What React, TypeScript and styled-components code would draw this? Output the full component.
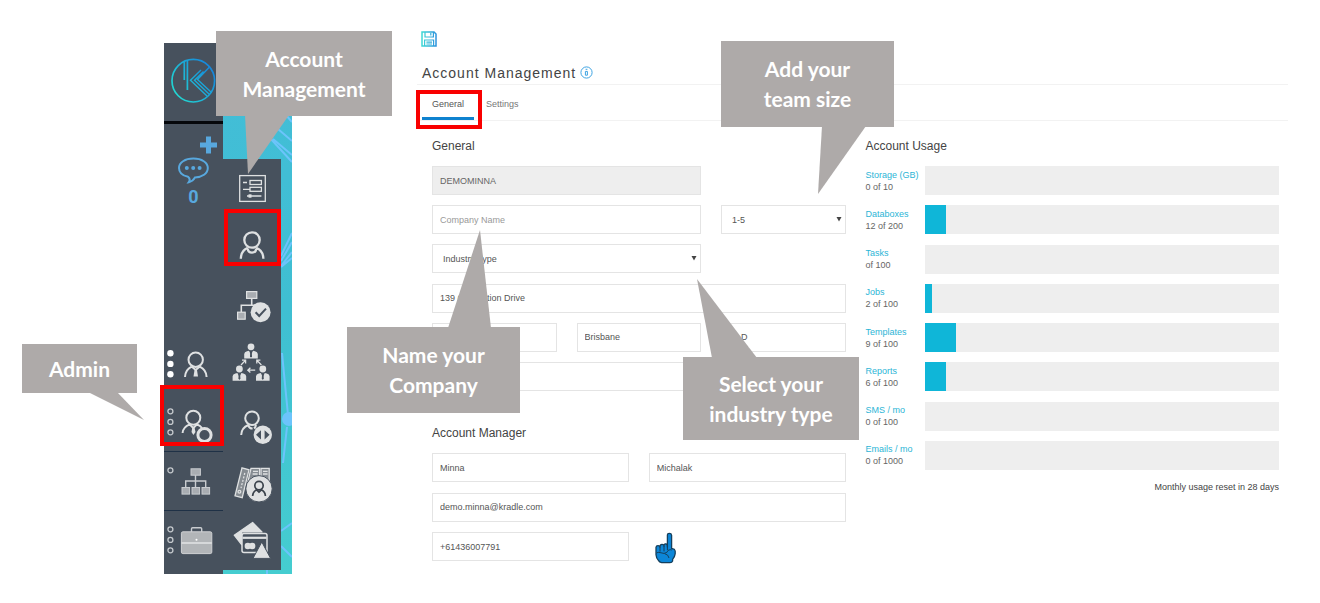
import React from "react";
import styled, { createGlobalStyle } from "styled-components";

const GlobalStyle = createGlobalStyle`
  *, *::before, *::after { box-sizing: border-box; }
  body {
    margin: 0;
    background: #fff;
    color: #555;
    font-family: "Liberation Sans", Arial, sans-serif;
    font-size: 9px;
  }
`;

const Page = styled.div`
  position: relative;
  display: flex;
  align-items: flex-start;
  gap: 125px;
  min-width: 1100px;
  min-height: 100vh;
  padding: 31px 32px 28px 164px;
`;

/* ---------- side navigation ---------- */

const Sidebar = styled.nav`
  position: relative;
  flex: none;
  display: flex;
  width: 128px;
  min-height: 531px;
  margin-top: 12px;
  background: linear-gradient(#43bdd8, #3fbfd2 50%, #45cdd0);
`;

const Network = styled.svg`
  position: absolute;
  inset: 0;
  fill: none;
  stroke: #6cc4fb;
  stroke-width: 2;
`;

const PrimaryNav = styled.div`
  position: relative;
  display: flex;
  flex-direction: column;
  width: 59px;
  background: #47515d;
`;

const SubNav = styled.div`
  position: relative;
  display: grid;
  grid-auto-rows: 1fr;
  width: 58px;
  margin: 116px 0 4px;
  background: #47515d;
`;

const LogoLink = styled.a`
  height: 81px;
  border-bottom: 3px solid #05070b;
`;

const NavButton = styled.button<{ $divided?: boolean; $grow?: boolean }>`
  display: block;
  width: 100%;
  height: ${(p) => (p.$grow ? "63px" : p.$divided ? "59px" : "58px")};
  padding: 0;
  border: 0;
  border-bottom: ${(p) => (p.$divided ? "1px solid #1f3146" : "0")};
  background: none;
  cursor: pointer;
`;

const MessagesButton = styled.button`
  flex: 1;
  display: flex;
  flex-direction: column;
  align-items: center;
  padding: 0;
  border: 0;
  background: none;
  color: #58a8de;
  font: bold 18px/20px Roboto, sans-serif;
  cursor: pointer;
`;

const Glyph = styled.svg`
  display: block;
  fill: none;
  stroke: #dfe1e2;
  stroke-width: 2;
`;

/* ---------- main panel ---------- */

const Main = styled.main`
  flex: 1;
  min-width: 0;
`;

const IconButton = styled.button`
  display: block;
  width: 16px;
  height: 16px;
  margin-left: 4px;
  padding: 0;
  border: 0;
  background: none;
  cursor: pointer;
`;

const TitleRow = styled.header`
  display: flex;
  align-items: center;
  gap: 4px;
  margin-top: 14px;
  padding: 0 5px;
  height: 24px;
  border-bottom: 1px solid #f2f2f2;
`;

const Title = styled.h1`
  margin: 0;
  color: #444;
  font-size: 14px;
  line-height: 20px;
  font-weight: 400;
  letter-spacing: 1px;
`;

const Tabs = styled.div`
  display: flex;
  gap: 2px;
  height: 36px;
  padding: 0 5px;
  border-bottom: 1px solid #f2f2f2;
`;

const Tab = styled.button<{ $active?: boolean }>`
  height: 35px;
  padding: 5px 10px 0;
  border: 0;
  border-bottom: 3px solid ${(p) => (p.$active ? "#0f82cf" : "transparent")};
  background: none;
  color: ${(p) => (p.$active ? "#555" : "#777")};
  font: inherit;
  cursor: pointer;
`;

const Columns = styled.div`
  display: grid;
  grid-template-columns: 1fr 1fr;
  gap: 20px;
  padding: 15px 9px 0 15px;
`;

const Section = styled.section`
  margin-bottom: 32px;
`;

const SectionTitle = styled.h2`
  margin: 0 0 10px;
  color: #444;
  font-size: 12px;
  line-height: 20px;
  font-weight: 400;
`;

const Fields = styled.div<{ $minHeight: number }>`
  display: grid;
  grid-template-columns: repeat(6, 1fr);
  grid-auto-rows: 29px;
  align-content: space-between;
  column-gap: 20px;
  min-height: ${(p) => p.$minHeight}px;
`;

const TextInput = styled.input<{ $span: number; $start?: number }>`
  grid-column: ${(p) => p.$start ?? "auto"} / span ${(p) => p.$span};
  width: 100%;
  height: 29px;
  padding: 0 7px;
  border: 1px solid #e4e4e4;
  border-radius: 0;
  background: #fff;
  color: #555;
  font: inherit;
  &:disabled { background: #eee; color: #666; }
  &::placeholder { color: #999; opacity: 1; }
`;

const SelectBox = styled.div<{ $span: number }>`
  grid-column: span ${(p) => p.$span};
  display: grid;
  align-items: center;
  & > * { grid-area: 1 / 1; }
`;

const Select = styled.select`
  appearance: none;
  width: 100%;
  height: 29px;
  padding: 0 20px 0 10px;
  border: 1px solid #e4e4e4;
  border-radius: 0;
  background: #fff;
  color: #555;
  font: inherit;
`;

const Caret = styled.svg`
  justify-self: end;
  margin-right: 4px;
  fill: #444;
  pointer-events: none;
`;

const Pointer = styled.svg`
  grid-column: span 3;
  margin-left: 6px;
`;

const UsageList = styled.div`
  display: flex;
  flex-direction: column;
  justify-content: space-between;
  min-height: 304px;
`;

const UsageRow = styled.div`
  display: grid;
  grid-template-columns: 59px 1fr;
  align-items: center;
  line-height: 12px;
  white-space: nowrap;
`;

const UsageName = styled.div`
  color: #2cb5d6;
`;

const UsageCount = styled.div`
  color: #666;
`;

const Track = styled.div`
  height: 29px;
  background: #eee;
`;

const Fill = styled.div`
  height: 100%;
  background: #0fb6d8;
`;

const ResetNote = styled.p`
  margin: 11px 0 0;
  color: #444;
  line-height: 12px;
  text-align: right;
`;

/* ---------- annotations ---------- */

interface Box { $x: number; $y: number; $w: number; $h: number }

const Highlight = styled.div<Box>`
  position: absolute;
  left: ${(p) => p.$x}px;
  top: ${(p) => p.$y}px;
  width: ${(p) => p.$w}px;
  height: ${(p) => p.$h}px;
  border: 4px solid #f90000;
  pointer-events: none;
`;

const CalloutBox = styled.div<Box>`
  position: absolute;
  left: ${(p) => p.$x}px;
  top: ${(p) => p.$y}px;
  width: ${(p) => p.$w}px;
  height: ${(p) => p.$h}px;
  display: flex;
  align-items: center;
  justify-content: center;
  background: #aeaaa9;
  color: #fff;
  font: 700 21px/30px Lato, "Open Sans", sans-serif;
  text-align: center;
  white-space: pre-line;
`;

const Tail = styled.svg`
  position: absolute;
  left: 0;
  top: 0;
  overflow: visible;
  fill: #aeaaa9;
`;

function Callout({ x, y, w, h, tail, text }: { x: number; y: number; w: number; h: number; tail: string; text: string }) {
  return (
    <CalloutBox $x={x} $y={y} $w={w} $h={h}>
      <Tail width={w} height={h} aria-hidden="true"><polygon points={tail} /></Tail>
      <span>{text}</span>
    </CalloutBox>
  );
}

/* ---------- icons ---------- */

const light = "#dfe1e2";
const dark = "#47515d";

function Dots({ count, solid }: { count: number; solid?: boolean }) {
  return (
    <g fill={solid ? "#fff" : "none"} stroke={solid ? "none" : "#c5c9cd"} strokeWidth="1.3">
      {[18.3, 28.9, 39.3].slice(0, count).map((cy) => (
        <circle key={cy} cx="6.4" cy={cy} r={solid ? 3.2 : 2.5} />
      ))}
    </g>
  );
}

function TinyPerson({ x, y }: { x: number; y: number }) {
  return (
    <g transform={`translate(${x} ${y})`} stroke="none" fill={light}>
      <circle cx="0" cy="0" r="3.4" />
      <path d="M-6.8 11.8V7.2Q-6.6 4.8-4 4.4L-2 4L0 8L2 4L4 4.4Q6.6 4.8 6.8 7.2V11.8Z" />
      <path d="M-.7 5H.7L1 9.5L0 11L-1 9.5Z" fill={dark} />
    </g>
  );
}

const Logo = () => (
  <Glyph width="59" height="78" role="img" aria-label="Kradle">
    <defs>
      <linearGradient id="brand" gradientUnits="userSpaceOnUse" x1="10" y1="50" x2="50" y2="22">
        <stop offset="0" stopColor="#22d8d2" />
        <stop offset="1" stopColor="#157fdc" />
      </linearGradient>
    </defs>
    <g stroke="url(#brand)" strokeWidth="1.7">
      <circle cx="29.3" cy="37.7" r="21.3" />
      <path d="M20.3 18.5V37M23.4 17V47" />
      <path d="M37 27L26.5 37.2L43 53M39.5 28.5L30.5 37.2L45 51M46 23.5L33.5 36.5L47.5 49.5" strokeWidth="1.4" />
    </g>
  </Glyph>
);

const Chat = () => (
  <Glyph width="59" height="63" aria-hidden="true">
    <g stroke="#58a8de">
      <path d="M44.5 12.5V29.5M36 21H53" strokeWidth="5" />
      <path d="M24 52.8C18 51.5 15 48 15 44C15 38.5 21 34.6 29.4 34.6S43.8 38.5 43.8 44S38 53.4 31 53.4C30 55.4 27.5 57.6 24.8 58.2C26 56.5 26 54.5 24 52.8Z" />
      <circle cx="22.8" cy="44" r="1" />
      <circle cx="29.2" cy="44" r="1" />
      <circle cx="35.6" cy="44" r="1" />
    </g>
  </Glyph>
);

const Staff = () => (
  <Glyph width="59" height="58" aria-hidden="true">
    <Dots count={3} solid />
    <circle cx="31.7" cy="24.7" r="7.2" />
    <path d="M21 42C21.2 36.5 23 33.8 27.6 31.6M42.6 42C42.4 36.5 40.4 33.8 35.8 31.6M27.6 31.6L31.7 35L35.8 31.6" />
    <path d="M30.5 35H33L34 41.5H29.5Z" fill={light} stroke="none" />
  </Glyph>
);

const AdminIcon = () => (
  <Glyph width="59" height="58" aria-hidden="true">
    <Dots count={3} />
    <circle cx="29.3" cy="24.7" r="7" />
    <path d="M18.6 40C18.8 36 20.6 33.6 25.6 31.4M33 31.4Q36.5 33 38 35M25.6 31.4L29.3 35L33 31.4" />
    <path d="M28.2 35H30.6L31.5 39L29.4 42L27.5 39Z" fill={light} stroke="none" />
    <circle cx="40.5" cy="42" r="6.6" strokeWidth="3" fill={dark} />
    <path d="M30 50.2H50" stroke={dark} />
  </Glyph>
);

const OrgChart = () => (
  <Glyph width="59" height="58" aria-hidden="true">
    <Dots count={1} />
    <g fill="#a9adb2" strokeWidth="1" stroke="#c9ccd0">
      <path d="M31.5 23V35M21.7 35V29H41.7V35" fill="none" strokeWidth="1.4" />
      <rect x="27" y="16.8" width="9.4" height="6.4" />
      <rect x="18" y="35.5" width="7.6" height="6.6" />
      <rect x="28" y="35.5" width="7.6" height="6.6" />
      <rect x="38" y="35.5" width="7.6" height="6.6" />
    </g>
  </Glyph>
);

const Briefcase = () => (
  <Glyph width="59" height="63" aria-hidden="true">
    <Dots count={3} />
    <path d="M27.5 21V17.8Q27.5 16.8 28.6 16.8H36.6Q37.7 16.8 37.7 17.8V21" strokeWidth="1.4" stroke="#c9ccd0" />
    <rect x="17.4" y="20.8" width="30.4" height="21.8" rx="1.5" fill="#b2b5b8" stroke="#cfd1d3" strokeWidth="1" />
    <path d="M17.5 32H47.8" stroke="#e6e7e8" strokeWidth="1.4" />
    <circle cx="32.5" cy="28.8" r="1" fill="#fff" stroke="none" />
  </Glyph>
);

const FormIcon = () => (
  <Glyph width="58" height="58" aria-hidden="true">
    <g strokeWidth="1.3">
      <rect x="16.7" y="16.6" width="25.6" height="25.8" />
      <rect x="27" y="21.5" width="11.4" height="4" />
      <rect x="27" y="28.3" width="11.4" height="4" />
      <path d="M20 23.5H24M20 30.3H27M24 37H38.4" />
      <path d="M27 35.3V38.7" strokeWidth="3" />
    </g>
  </Glyph>
);

const Account = () => (
  <Glyph width="58" height="58" aria-hidden="true">
    <circle cx="29" cy="22" r="7.7" strokeWidth="2.3" />
    <path d="M17.8 40.8C18 34.6 20 31.6 24.8 29.8M40.4 40.8C40.2 34.6 38.2 31.6 33.2 29.8M24.8 30.6Q25 34.6 29 34.6Q33 34.6 33.2 30.6" strokeWidth="2.3" />
  </Glyph>
);

const OrgCheck = () => (
  <Glyph width="58" height="58" aria-hidden="true">
    <path d="M28.7 22V29.2M18.3 36V29.2H34" strokeWidth="1.6" />
    <rect x="23.6" y="15.6" width="10.2" height="6.8" fill="#a9adb2" strokeWidth="1.2" />
    <rect x="14.6" y="36.2" width="7.6" height="7" fill="#a9adb2" strokeWidth="1.2" />
    <circle cx="37.6" cy="36.2" r="10" fill={light} stroke="none" />
    <path d="M32.6 36.2L36.2 40L43 32.6" stroke={dark} />
  </Glyph>
);

const Team = () => (
  <Glyph width="58" height="58" aria-hidden="true">
    <TinyPerson x={28} y={11.8} />
    <TinyPerson x={16.4} y={34} />
    <TinyPerson x={39.8} y={34} />
    <g strokeWidth="1.3">
      <path d="M18 30L22.4 25.4M19 25.2H22.6V28.6M38.4 30L34 25.4M37.4 25.2H33.8V28.6M32.2 35.2H24.8M27.4 32.8L24.8 35.2L27.4 37.6" />
    </g>
  </Glyph>
);

const Switcher = () => (
  <Glyph width="58" height="58" aria-hidden="true">
    <circle cx="29" cy="24.2" r="6.8" />
    <path d="M18.2 41C18.4 36 20.4 33 25.4 31M25.4 31Q26 34.6 29.6 34.6M32.8 31Q33 33 31 34.4" />
    <circle cx="39.8" cy="40.8" r="9.2" fill={light} stroke="none" />
    <path d="M38 36.2V45.4L33 40.8ZM41.6 36.2V45.4L46.6 40.8Z" fill={dark} stroke="none" />
  </Glyph>
);

const Records = () => (
  <Glyph width="58" height="58" aria-hidden="true">
    <g strokeWidth="1.3" fill="#868c92">
      <path d="M19 14.8L26 16.8L19.2 44.6L12 42.8Z" />
      <path d="M28 15.4H36.6V30H24.6Z" />
      <path d="M38 15.4H46.2V30H38Z" />
      <path d="M30 18.4H35M29.6 21H34.6M40 18.4H44.6M40 21H44.6" />
      <path d="M21.8 20L18 35" strokeDasharray="2 1.5" />
      <circle cx="16.4" cy="38.8" r="1.4" />
    </g>
    <circle cx="36" cy="35.8" r="13.2" fill={light} stroke={dark} strokeWidth="1" />
    <g stroke="#3b434c" strokeWidth="1.7">
      <circle cx="36" cy="32.6" r="4.2" />
      <path d="M29.6 43C29.8 39.6 31 38 33.6 36.8L36 39L38.4 36.8C41 38 42.2 39.6 42.4 43" />
    </g>
  </Glyph>
);

const Billing = () => (
  <Glyph width="58" height="58" aria-hidden="true">
    <path d="M29.6 11.4L39 21H18.6V33.6L11.2 24.2Z" fill={light} strokeWidth="1.2" strokeLinejoin="round" />
    <rect x="19" y="22.6" width="25" height="18.8" rx="2" fill={dark} strokeWidth="1.5" />
    <path d="M19.5 26.8H43.6" strokeWidth="2.2" />
    <g fill={light} stroke="none">
      <circle cx="24.8" cy="35" r="3.2" />
      <circle cx="29.2" cy="35" r="3.2" />
    </g>
    <path d="M38.8 31L47.6 47.4H30Z" fill={light} stroke={dark} strokeWidth="1" />
  </Glyph>
);

const SaveIcon = () => (
  <svg width="16" height="16" fill="none" stroke="url(#save)" strokeWidth="1.5" aria-hidden="true">
    <defs>
      <linearGradient id="save" gradientUnits="userSpaceOnUse" x1="0" y1="0" x2="16" y2="0">
        <stop offset="0" stopColor="#3fdcd4" />
        <stop offset="1" stopColor="#2b8fdd" />
      </linearGradient>
    </defs>
    <path d="M1 1H13L15 3V15H1Z" />
    <path d="M4 1V6H12.4V1M3.6 15V9H12.6V15M9.8 2V4.6M5.4 11.2H11M5.4 13H11" strokeWidth="1.2" />
  </svg>
);

const InfoIcon = () => (
  <svg width="13" height="13" fill="none" stroke="#3fa4e2" role="img" aria-label="Help">
    <circle cx="6.5" cy="6.5" r="5.6" strokeWidth="1" />
    <path d="M5.4 5.4H7.4V9.2H5.4ZM5.6 3.3H7.4" strokeWidth="1" />
  </svg>
);

const Hand = () => (
  <Pointer width="23" height="32" viewBox="0 0 23 32" fill="#0c86d8" stroke="#153f5c" strokeWidth="1.3" strokeLinejoin="round" aria-hidden="true">
    <path d="M12.4 15V3.2Q12.4 1.4 14.4 1.4T16.6 3.2V16.4L19.4 17.4Q20.6 18.6 20.2 21.6Q19.8 25 17.6 27.4V29Q17 30.6 15 30.6H6.6Q4.4 30.4 3.4 28.4Q1.2 26 1 22.8V15.4Q1.2 13.6 3 13.6T5 15Q5 12.4 7 12.4T9 14Q9 11.6 10.8 11.8T12.4 15Z" />
    <path d="M5 15V19.6M9 14V19.4M12.4 14.6V18M1.6 21Q3 19.8 5 20.6L9 21.4Q12.6 21 13 18.4Q15.4 17.2 16.8 18M9.6 21.6Q13.6 22.6 14 26" fill="none" strokeWidth="1" />
  </Pointer>
);

const CaretIcon = () => (
  <Caret width="6" height="5" aria-hidden="true"><path d="M.5 0H5.5L3 4.5Z" /></Caret>
);

/* ---------- page ---------- */

const usage = [
  { name: "Storage (GB)", count: "0 of 10", percent: 0 },
  { name: "Databoxes", count: "12 of 200", percent: 6 },
  { name: "Tasks", count: "of 100", percent: 0 },
  { name: "Jobs", count: "2 of 100", percent: 2 },
  { name: "Templates", count: "9 of 100", percent: 9 },
  { name: "Reports", count: "6 of 100", percent: 6 },
  { name: "SMS / mo", count: "0 of 100", percent: 0 },
  { name: "Emails / mo", count: "0 of 1000", percent: 0 },
];

const subItems = [
  { label: "Forms", Icon: FormIcon },
  { label: "Account management", Icon: Account },
  { label: "Approvals", Icon: OrgCheck },
  { label: "Teams", Icon: Team },
  { label: "Switch user", Icon: Switcher },
  { label: "Records", Icon: Records },
  { label: "Billing", Icon: Billing },
];

export default function App() {
  return (
    <Page>
      <GlobalStyle />

      <Sidebar aria-label="Main">
        <Network width="128" height="531" aria-hidden="true">
          <path d="M122 72L128 79M114 86L128 98M106 95L128 119M109 96L128 112M117 213L128 190M117 218L128 199M117 223L128 209M117 224L128 215M118 310L124 372M119 420L123 384M117 488L128 480M117 503L128 514M103 525V531" />
          <circle cx="125" cy="376" r="7" fill="#6cc4fb" stroke="none" />
        </Network>
        <PrimaryNav>
          <LogoLink href="#home"><Logo /></LogoLink>
          <MessagesButton aria-label="Messages">
            <Chat />
            <span>0</span>
          </MessagesButton>
          <NavButton aria-label="Staff"><Staff /></NavButton>
          <NavButton aria-label="Admin" $divided><AdminIcon /></NavButton>
          <NavButton aria-label="Organisation" $divided><OrgChart /></NavButton>
          <NavButton aria-label="Jobs" $grow><Briefcase /></NavButton>
        </PrimaryNav>
        <SubNav>
          {subItems.map(({ label, Icon }) => (
            <NavButton key={label} aria-label={label}><Icon /></NavButton>
          ))}
        </SubNav>
      </Sidebar>

      <Main>
        <IconButton aria-label="Save"><SaveIcon /></IconButton>
        <TitleRow>
          <Title>Account Management</Title>
          <InfoIcon />
        </TitleRow>
        <Tabs role="tablist">
          <Tab role="tab" aria-selected="true" $active>General</Tab>
          <Tab role="tab" aria-selected="false">Settings</Tab>
        </Tabs>

        <Columns>
          <form>
            <Section>
              <SectionTitle>General</SectionTitle>
              <Fields $minHeight={225}>
                <TextInput $span={4} aria-label="Account" defaultValue="DEMOMINNA" disabled />
                <TextInput $span={4} $start={1} aria-label="Company name" placeholder="Company Name" />
                <SelectBox $span={2}>
                  <Select aria-label="Team size"><option>1-5</option></Select>
                  <CaretIcon />
                </SelectBox>
                <SelectBox $span={4}>
                  <Select aria-label="Industry type"><option>Industry Type</option></Select>
                  <CaretIcon />
                </SelectBox>
                <TextInput $span={6} $start={1} aria-label="Address" defaultValue="139 Coronation Drive" />
                <TextInput $span={2} aria-label="Address line 2" />
                <TextInput $span={2} aria-label="City" defaultValue="Brisbane" />
                <TextInput $span={2} aria-label="State" defaultValue="QLD" />
                <TextInput $span={6} aria-label="Country" />
              </Fields>
            </Section>
            <Section>
              <SectionTitle>Account Manager</SectionTitle>
              <Fields $minHeight={108}>
                <TextInput $span={3} aria-label="First name" defaultValue="Minna" />
                <TextInput $span={3} aria-label="Last name" defaultValue="Michalak" />
                <TextInput $span={6} aria-label="Email" defaultValue="demo.minna@kradle.com" />
                <TextInput $span={3} aria-label="Phone" defaultValue="+61436007791" />
                <Hand />
              </Fields>
            </Section>
          </form>

          <Section>
            <SectionTitle>Account Usage</SectionTitle>
            <UsageList>
              {usage.map((item) => (
                <UsageRow key={item.name}>
                  <div>
                    <UsageName>{item.name}</UsageName>
                    <UsageCount>{item.count}</UsageCount>
                  </div>
                  <Track><Fill style={{ width: `${item.percent}%` }} /></Track>
                </UsageRow>
              ))}
            </UsageList>
            <ResetNote>Monthly usage reset in 28 days</ResetNote>
          </Section>
        </Columns>
      </Main>

      <Highlight $x={416} $y={90} $w={66} $h={39} />
      <Highlight $x={224} $y={209} $w={57} $h={57} />
      <Highlight $x={160} $y={385} $w={64} $h={61} />

      <Callout x={216} y={31} w={176} h={85} tail="29,84 73,84 32,143" text={"Account\nManagement"} />
      <Callout x={721} y={41} w={173} h={86} tail="101,85 145,85 97,153" text={"Add your\nteam size"} />
      <Callout x={347} y={327} w={173} h={86} tail="101,1 144,1 133,-97" text={"Name your\nCompany"} />
      <Callout x={683} y={357} w={176} h={83} tail="29,1 74,1 14,-78" text={"Select your\nindustry type"} />
      <Callout x={22} y={344} w={115} h={49} tail="66,48 95,48 122,76" text="Admin" />
    </Page>
  );
}
